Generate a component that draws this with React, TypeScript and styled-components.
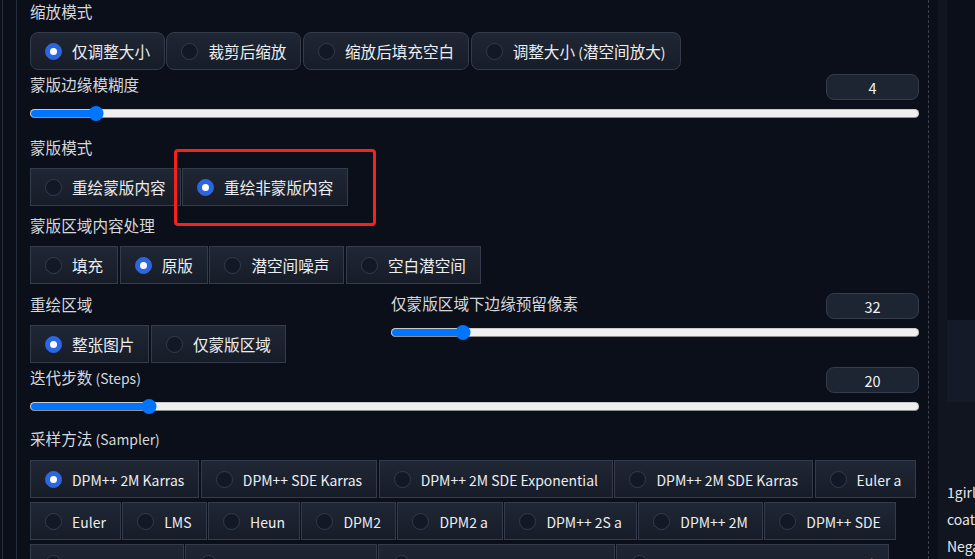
import React from "react";
import styled, { createGlobalStyle } from "styled-components";

const GlobalStyle = createGlobalStyle`
  html, body { margin: 0; padding: 0; background: #0b0f19; }
  body {
    width: 975px;
    height: 559px;
    overflow: hidden;
    font-family: "Noto Sans CJK SC", "Noto Sans", sans-serif;
  }
  * { box-sizing: border-box; }
`;

const Page = styled.div`
  display: flex;
  width: 975px;
  height: 559px;
  overflow: hidden;
  padding-left: 2px;
  background: #0b0f19;
`;

const OuterRail = styled.div`
  display: flex;
  border-left: 1px solid #262d3b;
  padding-left: 13px;
`;

const MainPanel = styled.div`
  position: relative;
  width: 913px;
  display: flex;
  flex-direction: column;
  border-left: 1px solid #262d3b;
  border-right: 1px dashed #3a4252;
  padding: 0 9px 0 13px;
`;

const Block = styled.div<{ $mt: number }>`
  display: flex;
  flex-direction: column;
  margin-top: ${(p) => p.$mt}px;
`;

const FieldLabel = styled.div<{ $mt?: number }>`
  margin-top: ${(p) => p.$mt ?? 0}px;
  font-size: 15.6px;
  line-height: 20px;
  color: #d5d8de;
  white-space: nowrap;
`;

const Latin = styled.span`
  font-size: 0.895em;
`;

const RadioRow = styled.div`
  display: flex;
  flex-wrap: wrap;
  column-gap: 1.5px;
  row-gap: 4px;
  margin-top: 11px;
`;

const Option = styled.label<{ $rounded?: boolean }>`
  display: flex;
  align-items: center;
  gap: 10px;
  height: 38px;
  padding: 0 14px;
  border: 1px solid #343c4b;
  border-radius: ${(p) => (p.$rounded ? "8px" : "0")};
  background: linear-gradient(to bottom, #202734, #161c28);
  color: #eceef1;
  font-size: 15.6px;
  line-height: 20px;
  white-space: nowrap;
`;

const Dot = styled.span<{ $checked?: boolean }>`
  flex: none;
  width: 17px;
  height: 17px;
  border-radius: 50%;
  display: flex;
  align-items: center;
  justify-content: center;
  background: ${(p) => (p.$checked ? "#2c66e3" : "#121826")};
  border: 1px solid ${(p) => (p.$checked ? "#2c66e3" : "#343c4b")};
  &::after {
    content: "";
    width: 7px;
    height: 7px;
    border-radius: 50%;
    background: #ffffff;
    display: ${(p) => (p.$checked ? "block" : "none")};
  }
`;

const SliderHeader = styled.div`
  display: flex;
  justify-content: space-between;
  align-items: flex-start;
`;

const NumberBox = styled.div`
  width: 93px;
  height: 26px;
  border: 1px solid #353d4c;
  border-radius: 8px;
  background: #1e2532;
  color: #f3f4f6;
  font-size: 14.5px;
  display: flex;
  align-items: center;
  justify-content: center;
`;

const TrackArea = styled.div`
  position: relative;
  height: 15px;
  margin-top: 6px;
  display: flex;
  align-items: center;
`;

const Track = styled.div`
  flex: 1;
  height: 9px;
  border-radius: 5px;
  background: #efefef;
  border: 1px solid #c9c9c9;
  border-bottom-color: #8f8f8f;
  display: flex;
  overflow: hidden;
`;

const Fill = styled.div`
  height: 100%;
  background: #0075ff;
`;

const Thumb = styled.div`
  position: absolute;
  top: 0;
  width: 15px;
  height: 15px;
  border-radius: 50%;
  background: #0075ff;
  transform: translateX(-50%);
`;

const TwoCol = styled.div`
  display: grid;
  grid-template-columns: 345px 1fr;
  column-gap: 16px;
  margin-top: 9px;
`;

const Highlight = styled.div`
  position: absolute;
  left: 157px;
  top: 149px;
  width: 202px;
  height: 77px;
  border: 3px solid #f5211d;
  border-radius: 4px;
  pointer-events: none;
`;

const RightCol = styled.div`
  flex: 1;
  margin-left: 9px;
  display: flex;
  flex-direction: column;
  background: #10151f;
  overflow: hidden;
`;

const Gallery = styled.div`
  height: 402px;
  margin-left: 9px;
  display: flex;
  flex-direction: column;
  flex: none;
`;

const GalleryView = styled.div`
  flex: 1;
  background: #0b0f19;
`;

const GalleryBar = styled.div`
  height: 82px;
  background: #141a27;
`;

const PromptText = styled.div`
  margin-top: 77px;
  padding-left: 9px;
  font-size: 14px;
  line-height: 27px;
  color: #e5e7eb;
  white-space: nowrap;
`;

const CJK = /[\u3000-\u303f\u4e00-\u9fff\uff00-\uffef]/;

const Txt: React.FC<{ text: string }> = ({ text }) => {
  const parts = text.split(/([\u3000-\u303f\u4e00-\u9fff\uff00-\uffef]+)/).filter(Boolean);
  return (
    <>
      {parts.map((p, i) =>
        CJK.test(p) ? <React.Fragment key={i}>{p}</React.Fragment> : <Latin key={i}>{p}</Latin>
      )}
    </>
  );
};

type Opt = { label: string; checked?: boolean };

const RadioGroup: React.FC<{ options: Opt[]; rounded?: boolean }> = ({ options, rounded }) => (
  <RadioRow>
    {options.map((o) => (
      <Option key={o.label} $rounded={rounded}>
        <Dot $checked={o.checked} />
        <span>
          <Txt text={o.label} />
        </span>
      </Option>
    ))}
  </RadioRow>
);

const Slider: React.FC<{ label: string; value: string; frac: number; mt: number }> = ({
  label,
  value,
  frac,
  mt,
}) => {
  const pos = `calc(7.5px + (100% - 15px) * ${frac})`;
  return (
    <Block $mt={mt}>
      <SliderHeader>
        <FieldLabel $mt={0}>
          <Txt text={label} />
        </FieldLabel>
        <NumberBox>{value}</NumberBox>
      </SliderHeader>
      <TrackArea>
        <Track>
          <Fill style={{ width: pos }} />
        </Track>
        <Thumb style={{ left: pos }} />
      </TrackArea>
    </Block>
  );
};

export default function App() {
  return (
    <>
      <GlobalStyle />
      <Page>
        <OuterRail>
          <MainPanel>
            <Block $mt={1}>
              <FieldLabel>缩放模式</FieldLabel>
              <RadioGroup
                rounded
                options={[
                  { label: "仅调整大小", checked: true },
                  { label: "裁剪后缩放" },
                  { label: "缩放后填充空白" },
                  { label: "调整大小 (潜空间放大)" },
                ]}
              />
            </Block>
            <Slider label="蒙版边缘模糊度" value="4" frac={0.067} mt={4} />
            <Block $mt={16}>
              <FieldLabel>蒙版模式</FieldLabel>
              <RadioGroup
                options={[{ label: "重绘蒙版内容" }, { label: "重绘非蒙版内容", checked: true }]}
              />
            </Block>
            <Block $mt={9}>
              <FieldLabel>蒙版区域内容处理</FieldLabel>
              <RadioGroup
                options={[
                  { label: "填充" },
                  { label: "原版", checked: true },
                  { label: "潜空间噪声" },
                  { label: "空白潜空间" },
                ]}
              />
            </Block>
            <TwoCol>
              <Block $mt={1}>
                <FieldLabel>重绘区域</FieldLabel>
                <RadioGroup options={[{ label: "整张图片", checked: true }, { label: "仅蒙版区域" }]} />
              </Block>
              <Slider label="仅蒙版区域下边缘预留像素" value="32" frac={0.125} mt={0} />
            </TwoCol>
            <Slider label="迭代步数 (Steps)" value="20" frac={0.1275} mt={4} />
            <Block $mt={14}>
              <FieldLabel>
                <Txt text="采样方法 (Sampler)" />
              </FieldLabel>
              <RadioGroup
                options={[
                  { label: "DPM++ 2M Karras", checked: true },
                  { label: "DPM++ SDE Karras" },
                  { label: "DPM++ 2M SDE Exponential" },
                  { label: "DPM++ 2M SDE Karras" },
                  { label: "Euler a" },
                  { label: "Euler" },
                  { label: "LMS" },
                  { label: "Heun" },
                  { label: "DPM2" },
                  { label: "DPM2 a" },
                  { label: "DPM++ 2S a" },
                  { label: "DPM++ 2M" },
                  { label: "DPM++ SDE" },
                  { label: "DPM++ 2M SDE" },
                  { label: "DPM++ 2M SDE Heun" },
                  { label: "DPM++ 2M SDE Heun Karras" },
                  { label: "DPM++ 2M SDE Heun Exponential" },
                ]}
              />
            </Block>
            <Highlight />
          </MainPanel>
        </OuterRail>
        <RightCol>
          <Gallery>
            <GalleryView />
            <GalleryBar />
          </Gallery>
          <PromptText>
            <div>1girl, solo, long hair</div>
            <div>coat, outdoors, snow</div>
            <div>Negative prompt: lowres</div>
          </PromptText>
        </RightCol>
      </Page>
    </>
  );
}
